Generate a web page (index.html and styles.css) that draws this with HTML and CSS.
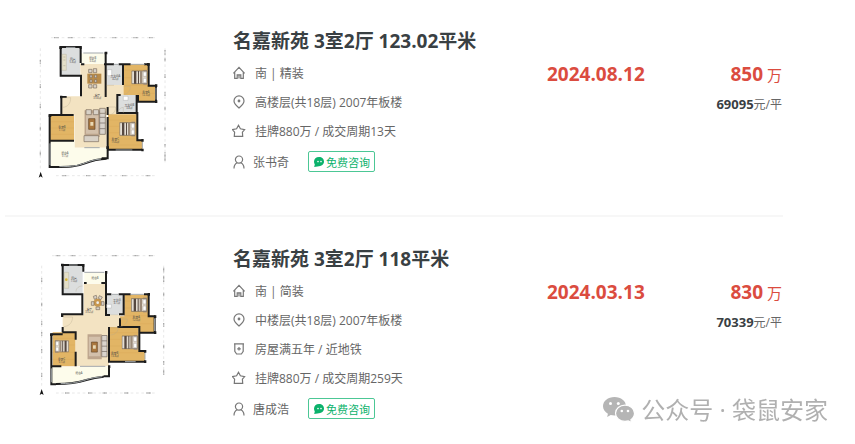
FILE: index.html
```html
<!DOCTYPE html>
<html lang="zh-CN">
<head>
    <meta charset="UTF-8">
    <meta name="viewport" content="width=device-width, initial-scale=1.0">
    <title>名嘉新苑 成交记录</title>
    <link rel="stylesheet" href="styles.css">
</head>
<body>
    <svg class="sprite" aria-hidden="true">
        <symbol id="icon-home" viewBox="0 0 14 14">
            <path d="M1.400 7.400 7 1.400l5.600 6M2.700 6.200v6.200h2.500V8.800h3.600v3.600h2.500V6.200M7 9.600v2.800" />
        </symbol>
        <symbol id="icon-pin" viewBox="0 0 14 14">
            <path d="M7 13C4.400 10.600 2 8.600 2 5.900a5 5 0 0 1 10 0C12 8.600 9.600 10.600 7 13z" />
            <circle cx="7" cy="6" r=".8" />
        </symbol>
        <symbol id="icon-star" viewBox="0 0 14 14">
            <path d="m6.500 1.300 1.900 3.500 4.200.8-2.200 2.600.3 4.200H2.300l.3-4.200L.4 5.600l4.200-.8z" />
        </symbol>
        <symbol id="icon-tag" viewBox="0 0 14 14">
            <path d="M2.800 1.800h8.400v7.600L9.400 12H4.600L2.800 9.400zM2 1.800h10" />
            <path d="M7 5v3.600M5.200 6.800h3.600" />
        </symbol>
        <symbol id="icon-user" viewBox="0 0 14 14">
            <circle cx="7" cy="4.600" r="3.600" />
            <path d="M2 13.400c0-3 1.400-4.700 3.200-5.600M12 13.400c0-3-1.400-4.700-3.200-5.600" />
        </symbol>
        <symbol id="icon-chat" viewBox="0 0 12 12">
            <path fill="#0bb26c" d="M6 1c3 0 5 2 5 4.600S9 10.200 6 10.200L1.200 11l.6-2.600C1.200 7.600 1 6.700 1 5.600 1 3 3 1 6 1z" />
            <circle cx="5" cy="5.600" r=".8" fill="#fff" />
            <circle cx="8" cy="5.600" r=".8" fill="#fff" />
        </symbol>
        <!-- furniture -->
        <symbol id="bed" viewBox="0 0 50 46">
            <path fill="#b99b76" d="M36 0h12v9H36zM36 37h12v9H36z" />
            <path fill="#e4ddd2" stroke="#6d6258" stroke-width="2" d="M1 4h46v38H1z" />
            <path fill="#564840" d="M8 4h7v38H8zM20 4h3v38h-3z" />
            <path fill="#9b8a79" d="M26 4h7v38h-7z" />
            <path fill="#fff" stroke="#8b8077" d="M36 7h9v13h-9zM36 26h9v13h-9z" />
        </symbol>
        <symbol id="rug" viewBox="0 0 66 104">
            <path fill="#bda58d" d="M0 6h46v80H0z" />
            <path fill="#d3c0ab" d="M5 14h36v62H5z" />
            <path fill="#a9773f" stroke="#5f4426" stroke-width="2" d="M13 31h19v32H13z" />
            <path fill="#e9d9b4" d="M18 41h9v11h-9z" />
            <path fill="#d9d3cc" stroke="#6d625a" stroke-width="2" d="M46 10h17v68H46z" />
            <path stroke="#6d625a" stroke-width="2" d="M46 27h17M46 44h17M46 61h17" />
        </symbol>
    </svg>

    <main class="list">
        <article class="item">
            <svg class="plan" viewBox="0 0 450 480" role="img" aria-label="户型图">
                <g class="dims">
                    <path d="M63 38h312M31 70v365M405 70v342M78 452h300" />
                    <path class="dims-ticks" d="M72 38h14M115 38h14M182 38h13M247 38h13M310 38h14M357 38h12M31 105v12M31 178v12M31 238v12M31 305v12M31 380v12M405 75v14M405 98v12M405 148v12M405 202v12M405 245v12M405 305v12M405 357v10M405 382v26M97 452h13M168 452h13M215 452h13M276 452h13M347 452h14" />
                </g>
                <path class="hall" d="M150 116h80v252H133V270H94v-56h60z" />
                <path class="hall" d="M228 180h54v30h-20v60h-34z" />
                <path class="tile" d="M93 67h57v84H93zM230 118h48v62h-48zM263 210h57v54h-57z" />
                <path class="balcony" d="M153 85h76v32h-76zM62 348h72v20h98v33c-34 2-49 8-70 15-30 10-58 11-100 10z" />
                <path class="wood" d="M281 118h73v64h24v48h-55v-20h-42zM60 272h72v75H60zM234 268h88v76h15v31H234z" />
                <path class="grain" d="M283 135h70M283 158h70M283 181h94M323 205h54M62 290h70M62 309h70M62 328h70M236 285h84M236 304h84M236 323h84M236 342h84M236 360h100" />
                <path class="wall" d="M152 114V66H92v86h61v62M90 216h20M94 214v56M59 268v158h16M59 270h72M62 347h70M227 118v98M227 82v36M153 118h10M222 118h30M266 118h16M279 116v64M272 210h-10v54h60v82h15M280 118h22M342 118h14v64h24M378 182v48h-54v-20M320 210v58M233 276v124h-18M233 246v24M232 374h105M75 426c40 0 62 0 90-11 20-8 35-13 65-14" />
                <path class="window" d="M108 67h28M160 84h60M251 118h15M302 118h42M378 188v36M337 350v20M257 375h50M163 368h46M60 355v65M88 425c40 0 55-3 77-11 16-6 32-11 48-12" />
                <path class="door" d="M97 218h25c0 17-8 28-24 29M281 184h20c0 15-8 23-20 24M234 246h23c0 14-7 22-20 24M263 264c1-10 8-16 17-17v17M230 181h22" />
                <path class="knob" d="M88 64h8v8h-8zM149 64h6v8h-6zM224 80h8v8h-8zM351 114h8v8h-8zM375 178h7v8h-7zM375 226h7v8h-7zM334 342h7v8h-7zM334 371h7v8h-7zM90 212h7v8h-7zM56 268h8v8h-8zM229 364h8v8h-8z" />
                <path fill="#e4dfc8" stroke="#aaa38d" d="M96 88h13v48H96z" />
                <path stroke="#b5ae98" stroke-width="2" d="M100 96h6M100 105h6M100 122h6" />
                <path fill="#fff" stroke="#999" d="M232 134h13v18h-13zM280 214h14v12h-14z" />
                <path fill="#b98b48" d="M172 146h42v30h-42z" />
                <path class="chairs" d="M176 133h10v10h-10zM190 131h10v12h-10zM176 179h10v10h-10zM190 179h10v10h-10zM180 150h6v8h-6zM194 150h6v8h-6zM180 164h6v8h-6zM194 164h6v8h-6z" />
                <use href="#rug" x="163" y="250" width="66" height="104" />
                <path class="chairs" d="M168 254h16v15h-16zM190 254h16v15h-16zM162 332h44v18h-44zM209 250h17v15h-17z" />
                <use href="#bed" x="304" y="134" width="50" height="46" />
                <use href="#bed" x="268" y="289" width="50" height="46" />
                <g class="rooms">
                    <text x="128" y="104">厨房</text><text x="128" y="113">5.8㎡</text>
                    <text x="188" y="101">阳台B</text><text x="188" y="110">3.6㎡</text>
                    <text x="256" y="157">卫生间A</text><text x="256" y="166">4.2㎡</text>
                    <text x="202" y="214">客厅</text><text x="202" y="223">39.8㎡</text>
                    <text x="348" y="203">卧室A</text><text x="348" y="212">12.3㎡</text>
                    <text x="298" y="242">卫生间B</text><text x="298" y="251">3.8㎡</text>
                    <text x="96" y="308">卧室B</text><text x="96" y="317">7.1㎡</text>
                    <text x="256" y="345">卧室C</text><text x="256" y="354">15.6㎡</text>
                    <text x="105" y="388">阳台A</text><text x="105" y="397">9.7㎡</text>
                </g>
                <path fill="#111" d="m32 440 6 18-6-4-6 4z" />
            </svg>
            <div class="info">
                <h2 class="title">名嘉新苑 3室2厅 123.02平米</h2>
                <p class="row"><svg class="icon"><use href="#icon-home" /></svg>南 | 精装</p>
                <p class="row"><svg class="icon"><use href="#icon-pin" /></svg>高楼层(共18层) 2007年板楼</p>
                <p class="row"><svg class="icon"><use href="#icon-star" /></svg>挂牌880万 / 成交周期13天</p>
                <div class="row agent">
                    <svg class="icon"><use href="#icon-user" /></svg>
                    <span class="agent-name">张书奇</span>
                    <button class="consult" type="button"><svg class="chat"><use href="#icon-chat" /></svg>免费咨询</button>
                </div>
            </div>
            <time class="date" datetime="2024-08-12">2024.08.12</time>
            <div class="price">
                <p class="total"><b>850</b> 万</p>
                <p class="unit"><b>69095</b>元/平</p>
            </div>
        </article>

        <article class="item">
            <svg class="plan" viewBox="0 -6 450 480" role="img" aria-label="户型图">
                <g class="dims">
                    <path d="M66 32h308M35 62v368M401 62v330M78 444h296" />
                    <path class="dims-ticks" d="M77 32h14M122 32h14M187 32h13M247 32h14M311 32h14M357 32h12M35 100v12M35 173v12M35 229v12M35 261v12M35 312v12M35 385v12M401 68v14M401 92v20M401 143v12M401 190v12M401 234v12M401 299v12M401 348v12M401 374v16M105 444h13M174 444h13M218 444h13M283 444h13M349 444h14" />
                </g>
                <path class="hall" d="M161 116h67v94h42v36h-33v118H136V262H98v-52h63z" />
                <path class="tile" d="M99 62h59v84H99zM230 149h50v60h-50z" />
                <path class="balcony" d="M163 84h65v32h-65zM66 366h170v28c-26 2-47 6-66 12-33 10-58 12-104 11z" />
                <path class="wood" d="M283 149h72v66h20v48h-48v-18h-57v-31h13zM68 262h68v102H68zM238 246h88v72h19v31H238z" />
                <path class="grain" d="M283 168h70M283 189h70M272 212h103M328 236h46M68 280h66M68 300h66M68 322h66M68 343h66M240 263h86M240 283h86M240 303h86M240 323h104" />
                <path class="wall" d="M160 80V60H98v88h59v60H96v6M98 246v16M97 262h40v22M137 320v44M64 268v150h14M64 268h34M162 114h8M214 114h14M228 82v128h12M228 148h16M266 148h36M281 148v60h-14M342 148h14v66h20M374 214v49h-46v-18M270 220v26M262 246h66v72h17M237 246v104h108M237 364v30h-16M64 364h30M78 417c42 0 60-2 91-12 16-5 28-8 52-10" />
                <path class="window" d="M117 60h26M163 82h60M245 148h20M302 148h40M374 220v38M345 324v20M285 350h32M150 364h76M64 370v42M92 416c40-1 52-4 77-12 15-5 30-7 48-9" />
                <path class="door" d="M101 216h27c-1 16-9 27-26 29M138 140c0-10 8-17 20-17M240 248h25c-2 14-10 21-24 22M270 222h22c0 12-8 20-20 22M240 209h24" />
                <path class="knob" d="M93 56h8v8h-8zM156 57h7v8h-7zM225 78h7v8h-7zM353 144h7v8h-7zM372 211h7v8h-7zM372 259h7v8h-7zM342 315h7v8h-7zM342 346h7v8h-7zM93 208h7v8h-7zM60 265h8v8h-8zM234 361h7v8h-7z" />
                <path fill="#e4dfc8" stroke="#aaa38d" d="M103 82h13v48h-13z" />
                <circle cx="109" cy="104" r="4" fill="#d9b73b" />
                <path fill="#fff" stroke="#999" d="M230 178h14v11h-14z" />
                <circle cx="203" cy="173" r="12" fill="#c8974f" />
                <circle cx="203" cy="173" r="4" fill="#eee" />
                <path class="chairs" d="m190 154 9-3 2 9-8 3zM208 152l9 4-4 8-8-4zM184 170h8v11h-8zM214 170h8v11h-8zM198 186h11v8h-11z" />
                <use href="#rug" x="172" y="262" width="62" height="98" />
                <use href="#bed" x="303" y="157" width="50" height="46" />
                <use href="#bed" x="275" y="269" width="50" height="46" />
                <g transform="matrix(-1 0 0 1 122 284)"><use href="#bed" width="54" height="40" /></g>
                <g class="rooms">
                    <text x="132" y="103">厨房</text><text x="132" y="112">7.0㎡</text>
                    <text x="195" y="101">阳台B</text>
                    <text x="261" y="169">卫生间</text><text x="261" y="178">4.1㎡</text>
                    <text x="178" y="196">客厅</text><text x="178" y="205">39.2㎡</text>
                    <text x="319" y="218">卧室A</text><text x="319" y="227">12.3㎡</text>
                    <text x="95" y="344">卧室C</text><text x="95" y="353">9.1㎡</text>
                    <text x="254" y="326">卧室B</text><text x="254" y="335">13.8㎡</text>
                    <text x="147" y="387">阳台A</text>
                </g>
                <path fill="#111" d="m35 432 6 18-6-4-6 4z" />
            </svg>
            <div class="info">
                <h2 class="title">名嘉新苑 3室2厅 118平米</h2>
                <p class="row"><svg class="icon"><use href="#icon-home" /></svg>南 | 简装</p>
                <p class="row"><svg class="icon"><use href="#icon-pin" /></svg>中楼层(共18层) 2007年板楼</p>
                <p class="row"><svg class="icon"><use href="#icon-tag" /></svg>房屋满五年 / 近地铁</p>
                <p class="row"><svg class="icon"><use href="#icon-star" /></svg>挂牌880万 / 成交周期259天</p>
                <div class="row agent">
                    <svg class="icon"><use href="#icon-user" /></svg>
                    <span class="agent-name">唐成浩</span>
                    <button class="consult" type="button"><svg class="chat"><use href="#icon-chat" /></svg>免费咨询</button>
                </div>
            </div>
            <time class="date" datetime="2024-03-13">2024.03.13</time>
            <div class="price">
                <p class="total"><b>830</b> 万</p>
                <p class="unit"><b>70339</b>元/平</p>
            </div>
        </article>
    </main>

    <div class="watermark">
        <svg class="wechat" viewBox="0 0 32 26" aria-hidden="true">
            <path fill="#b5b5b5" d="M11.500 0C18 0 23 4 23 9.300S18 18.600 11.500 18.600c-1.400 0-2.600-.2-3.800-.5L4.200 20l.7-3.300C2 15 0 12.400 0 9.300 0 4 5 0 11.500 0z" />
            <path fill="#b5b5b5" stroke="#fff" stroke-width="1.200" d="M22 8.200c5.300 0 9.500 3.600 9.500 8.100 0 2.600-1.400 4.900-3.600 6.400l.6 2.800-3.200-1.600c-1 .3-2.100.5-3.300.5-5.300 0-9.500-3.600-9.500-8.100s4.200-8.100 9.500-8.100z" />
            <circle cx="7.500" cy="6.600" r="1.500" fill="#fff" />
            <circle cx="15.300" cy="6.600" r="1.500" fill="#fff" />
            <circle cx="18.800" cy="14" r="1.300" fill="#fff" />
            <circle cx="25" cy="14" r="1.300" fill="#fff" />
        </svg>
        <span>公众号 · 袋鼠安家</span>
    </div>
</body>
</html>
```
FILE: styles.css
```css
body {
    margin: 0;
    background: #fff;
    color: #666;
    font-family: "Open Sans", "Noto Sans CJK SC", sans-serif;
    font-size: 12px;
}
h2, p {
    margin: 0;
}
.sprite {
    position: absolute;
    width: 0;
    height: 0;
}
.list {
    margin: 0 72px 0 5px;
}
.item {
    display: grid;
    grid-template-columns: 150px 1fr 98px 138px;
    align-items: start;
    padding: 25px 0 30px 25px;
}
.item + .item {
    padding-top: 26px;
    border-top: 2px solid #f7f7f7;
}
.plan {
    width: 150px;
    height: 160px;
}

/* floor plan */
.hall {
    fill: #f3e3c2;
}
.tile {
    fill: #dcdede;
}
.balcony {
    fill: #fdfceb;
}
.wood {
    fill: #e2b565;
}
.grain {
    stroke: #d5a554;
    stroke-width: 1;
}
.dims path {
    fill: none;
    stroke: #ddd;
    stroke-width: 2;
    stroke-dasharray: 8 8;
}
.dims .dims-ticks {
    stroke: #aaa;
    stroke-width: 4;
    stroke-dasharray: 3 1;
}
.wall {
    fill: none;
    stroke: #1c1c1c;
    stroke-width: 6;
}
.window {
    fill: none;
    stroke: #a3a8aa;
    stroke-width: 3;
}
.door {
    fill: none;
    stroke: #b3a68c;
    stroke-width: 1;
}
.knob {
    fill: #1c1c1c;
}
.chairs {
    fill: #d8d1c7;
    stroke: #7b6c5c;
    stroke-width: 2;
}
.rooms {
    fill: #444;
    font-size: 8px;
    text-anchor: middle;
}

.info {
    margin-left: 53px;
}
.title {
    color: #394043;
    font-size: 19px;
    line-height: 33px;
    white-space: nowrap;
}
.row {
    display: flex;
    align-items: center;
    height: 29px;
    white-space: nowrap;
}
.icon {
    flex: none;
    width: 14px;
    height: 14px;
    margin: 0 9px 0 -1px;
    fill: none;
    stroke: #777;
    stroke-width: 1.2;
}
.agent {
    margin-top: 2px;
}
.agent .icon {
    margin-right: 7px;
}
.agent-name {
    width: 55px;
}
.consult {
    display: flex;
    align-items: center;
    gap: 1px;
    height: 21px;
    padding: 0 4px;
    border: 1px solid #4cc795;
    border-radius: 2px;
    background: #fff;
    color: #0bb26c;
    font-family: inherit;
    font-size: 11px;
    cursor: pointer;
}
.chat {
    width: 12px;
    height: 12px;
}
.date {
    padding-top: 34px;
    color: #db4c3f;
    font-size: 19px;
    font-weight: bold;
    line-height: 30px;
}
.price {
    padding: 34px 1px 0 0;
    text-align: right;
}
.total {
    color: #db4c3f;
    font-size: 15px;
    line-height: 30px;
}
.total b {
    font-size: 19px;
}
.unit {
    line-height: 28px;
}
.unit b {
    color: #394043;
    font-size: 13px;
}

.watermark {
    position: fixed;
    right: 27px;
    bottom: 16px;
    display: flex;
    align-items: center;
    gap: 6px;
    color: #b0b0b0;
    font-size: 24px;
    line-height: 36px;
}
.wechat {
    width: 32px;
    height: 26px;
}
```
